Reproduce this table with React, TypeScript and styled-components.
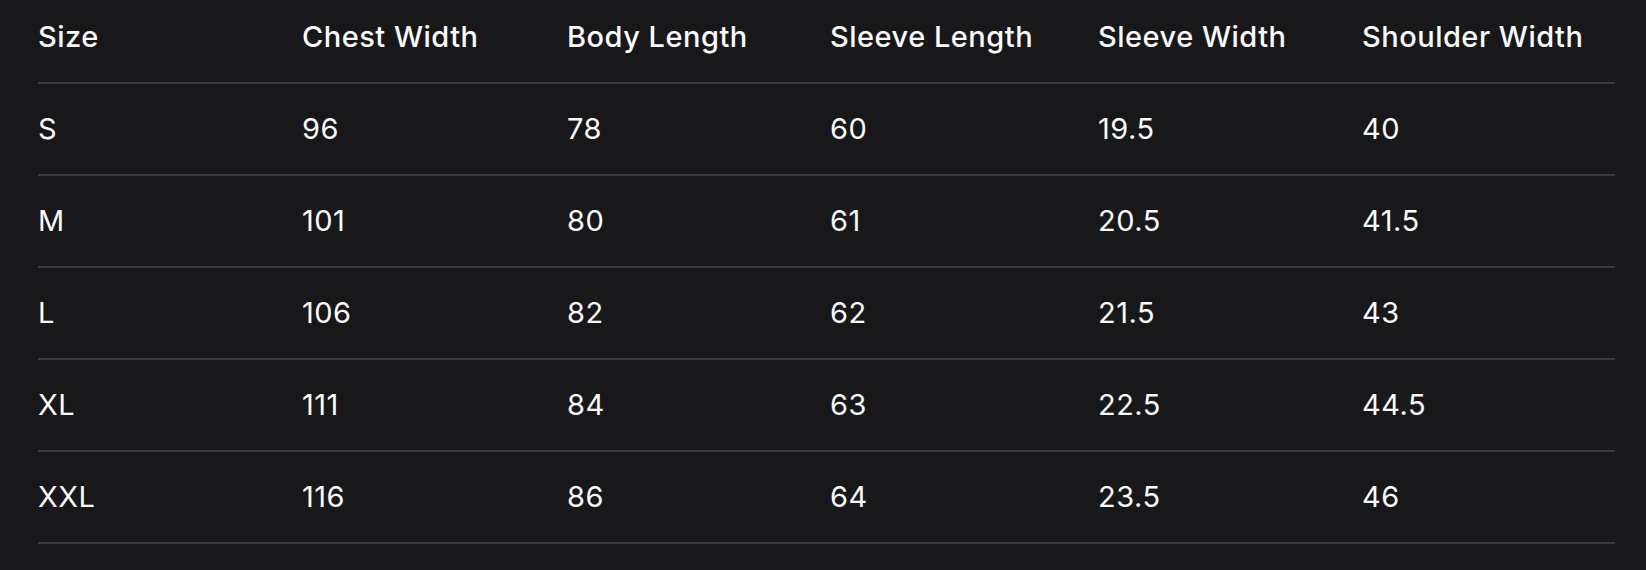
import { createGlobalStyle, styled } from 'styled-components'

const GlobalStyle = createGlobalStyle`
  html, body {
    margin: 0;
    padding: 0;
    background: #18181b;
  }
  body {
    font-family: 'Inter', 'Liberation Sans', sans-serif;
    color: #fafafa;
  }
`

const Page = styled.div`
  width: 1646px;
  height: 570px;
  padding: 0 31px 0 38px;
  box-sizing: border-box;
  background: #18181b;
`

const Table = styled.div`
  width: 1577px;
  display: grid;
  grid-template-columns: 264px 265px 263px 268px 264px 1fr;
`

const Row = styled.div`
  display: contents;
`

const Cell = styled.div<{ $head?: boolean }>`
  font-size: 29px;
  line-height: 42px;
  letter-spacing: 0.5px;
  font-weight: ${(p) => (p.$head ? 500 : 400)};
  padding: ${(p) => (p.$head ? '16px 0 24px' : '24px 0 24px')};
  border-bottom: 2px solid #3a3a40;
  white-space: nowrap;
`

const headers = ['Size', 'Chest Width', 'Body Length', 'Sleeve Length', 'Sleeve Width', 'Shoulder Width']

const rows = [
  ['S', '96', '78', '60', '19.5', '40'],
  ['M', '101', '80', '61', '20.5', '41.5'],
  ['L', '106', '82', '62', '21.5', '43'],
  ['XL', '111', '84', '63', '22.5', '44.5'],
  ['XXL', '116', '86', '64', '23.5', '46'],
]

function App() {
  return (
    <>
      <GlobalStyle />
      <Page>
        <Table>
          <Row>
            {headers.map((h) => (
              <Cell key={h} $head>
                {h}
              </Cell>
            ))}
          </Row>
          {rows.map((r) => (
            <Row key={r[0]}>
              {r.map((v, i) => (
                <Cell key={i}>{v}</Cell>
              ))}
            </Row>
          ))}
        </Table>
      </Page>
    </>
  )
}

export default App
